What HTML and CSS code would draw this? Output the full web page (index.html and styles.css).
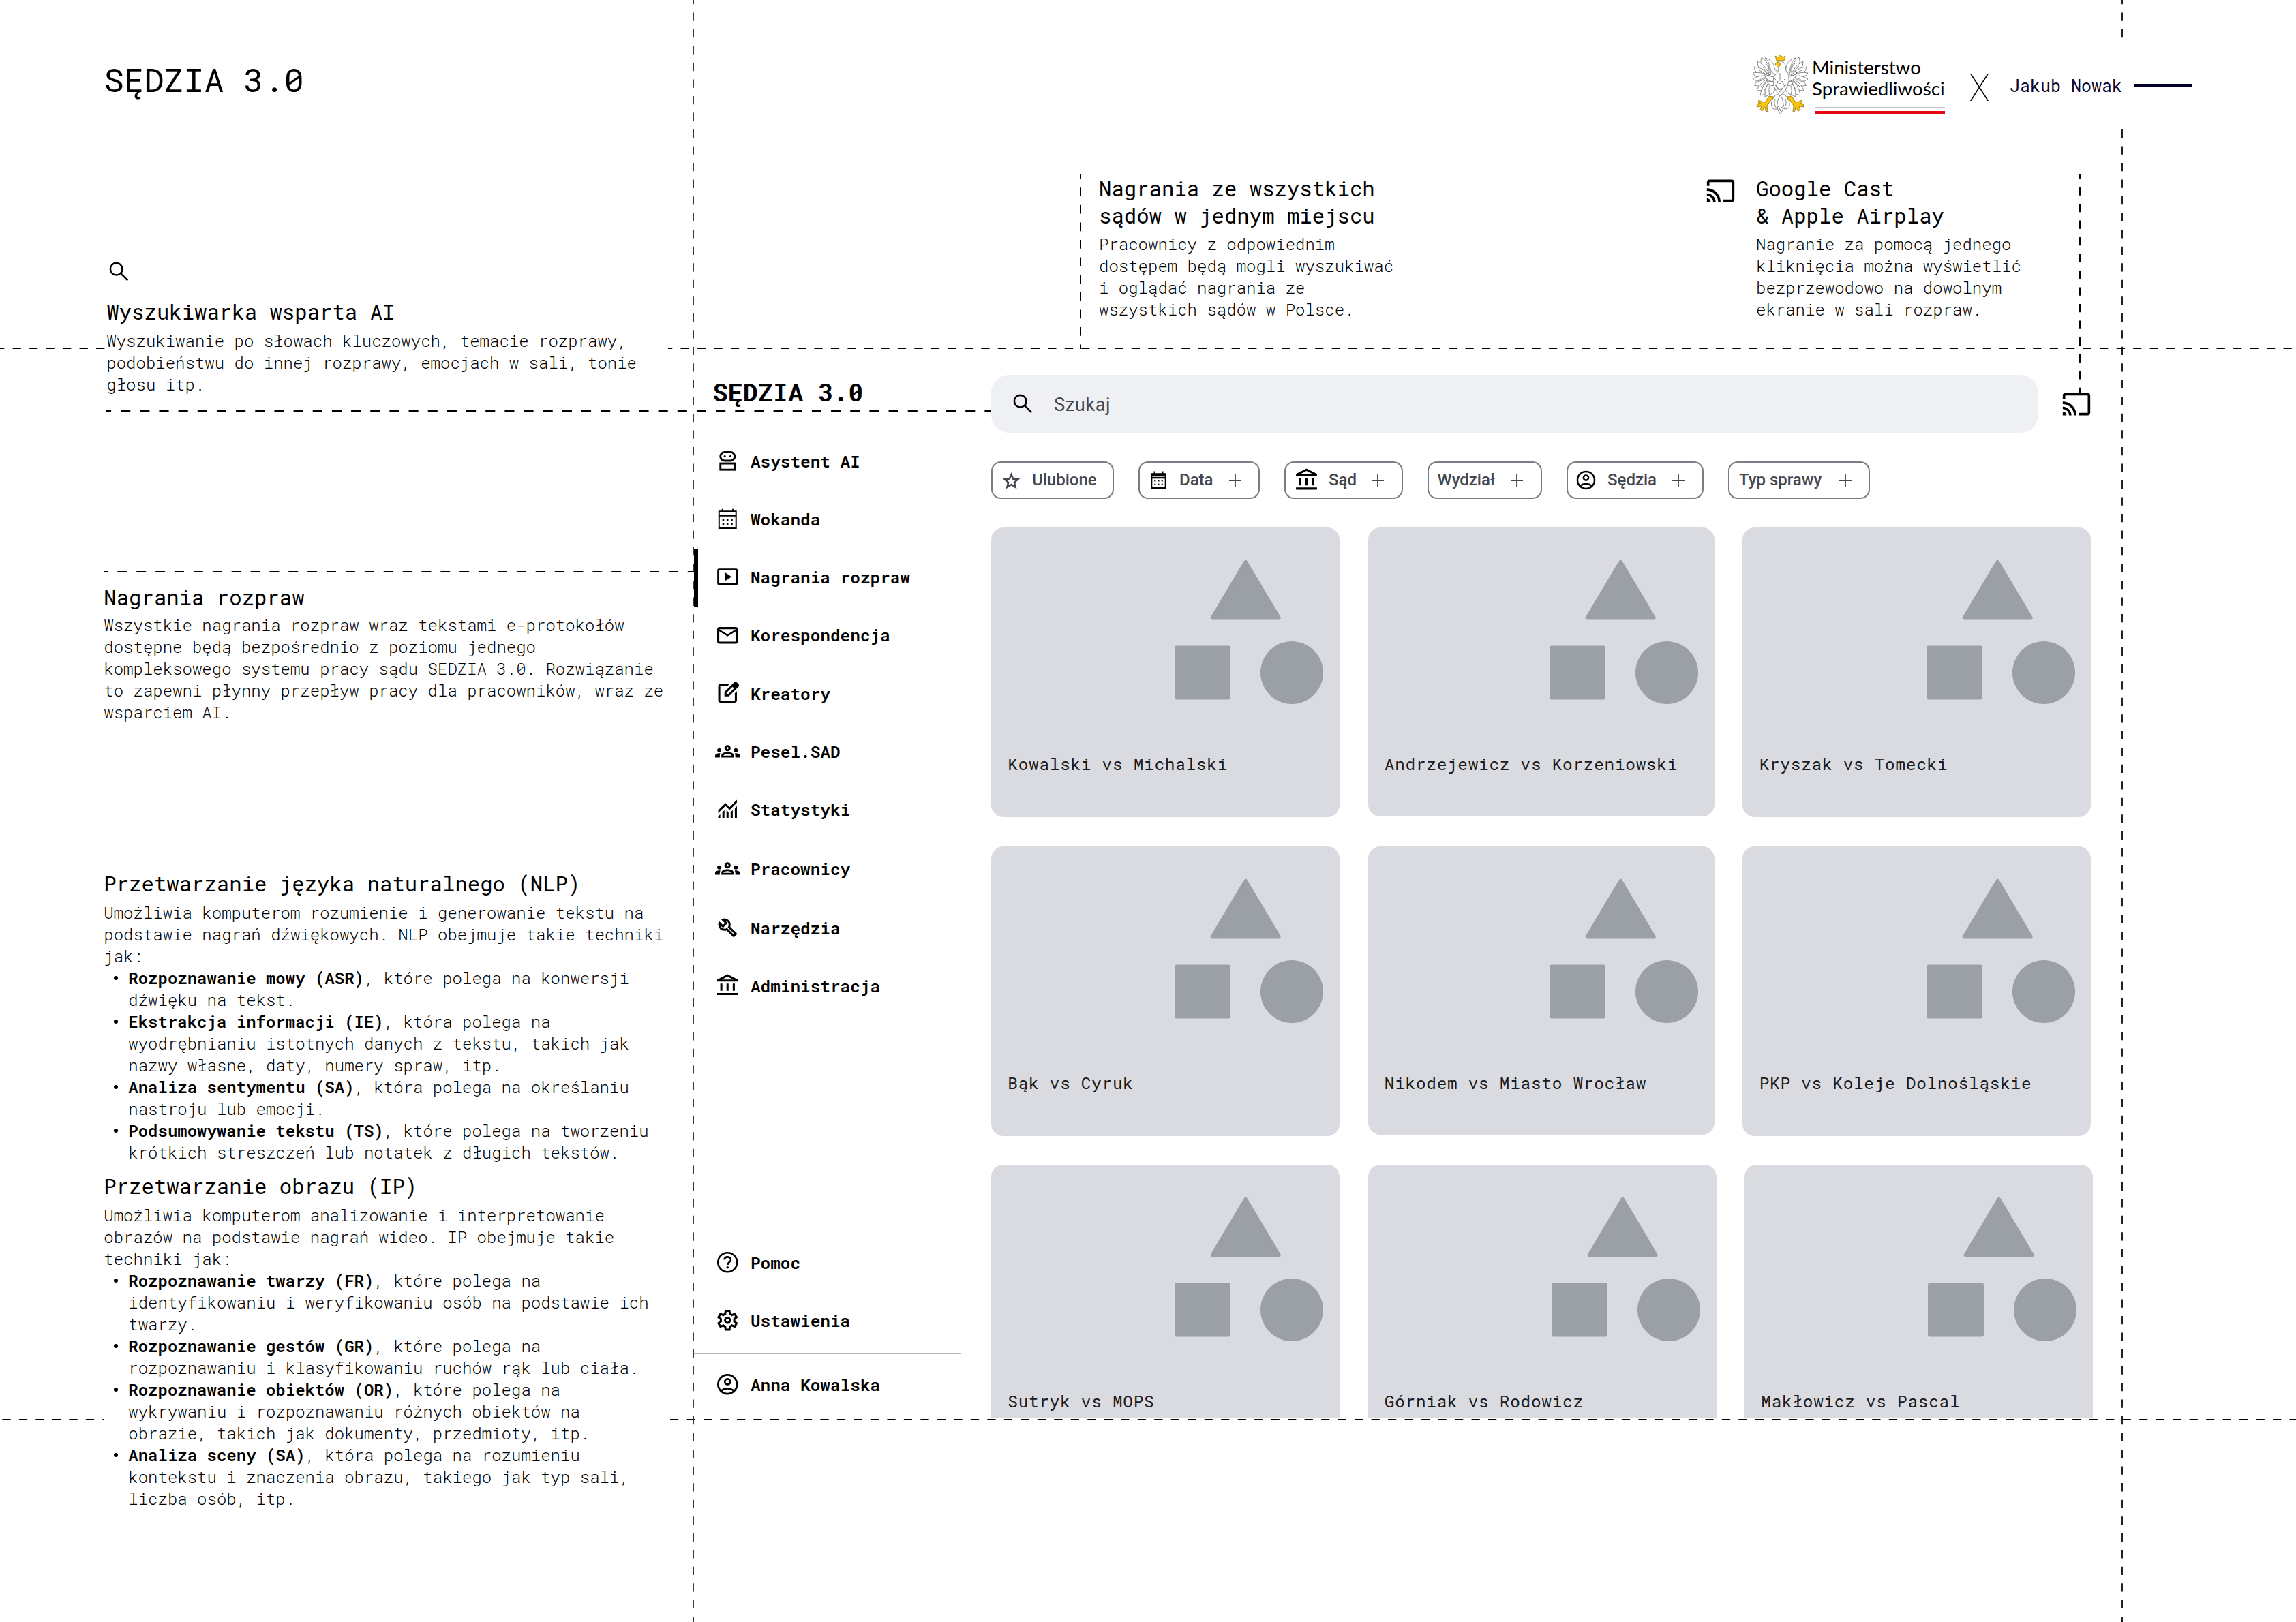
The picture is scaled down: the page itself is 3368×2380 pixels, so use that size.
FILE: index.html
```html
<!DOCTYPE html>
<html lang="pl">
<head>
<meta charset="utf-8">
<title>SĘDZIA 3.0</title>
<link rel="stylesheet" href="styles.css">
</head>
<body>
<svg class="sprite" aria-hidden="true">
  <symbol id="i-search" viewBox="0 0 24 24"><g fill="none" stroke="currentColor" stroke-width="1.65"><circle cx="9.5" cy="9.5" r="5.7"/><path d="M13.6 13.6l6.7 6.7"/></g></symbol>
  <symbol id="i-cast" viewBox="0 0 24 24"><path d="M1 18v3h3c0-1.66-1.34-3-3-3zm0-4v2c2.76 0 5 2.24 5 5h2c0-3.87-3.13-7-7-7zm0-4v2c4.97 0 9 4.03 9 9h2c0-6.08-4.93-11-11-11zm20-7H3c-1.1 0-2 .9-2 2v3h2V5h18v14h-7v2h7c1.1 0 2-.9 2-2V5c0-1.1-.9-2-2-2z"/></symbol>
  <symbol id="i-robot" viewBox="0 0 24 24"><g fill="none" stroke="currentColor" stroke-width="1.9"><rect x="5.1" y="3.5" width="13.8" height="8.3" rx="4.1"/><rect x="5.1" y="14.5" width="13.8" height="6"/></g><circle cx="9.3" cy="7.6" r="1"/><circle cx="14.7" cy="7.6" r="1"/></symbol>
  <symbol id="i-calendar" viewBox="0 0 24 24"><path fill="none" stroke="currentColor" stroke-width="1.3" d="M3.8 4.7h16.4v16.4H3.8zM3.800 9h16.4M7 2.4v2.300M17.2 2.400v2.300"/><path d="M7 12.100h1.700v1.700H7zm4.100 0h1.700v1.700h-1.700zm4.100 0h1.700v1.700h-1.700zM7 16.100h1.700v1.700H7zm4.100 0h1.700v1.700h-1.700zm4.100 0h1.700v1.700h-1.700z"/></symbol>
  <symbol id="i-calendar-bold" viewBox="0 0 24 24"><path fill="none" stroke="currentColor" stroke-width="1.800" stroke-linejoin="round" d="M4 5h16v16H4zM4 6.600h16M4 9.300h16M7.500 2v3M16.500 2v3"/><path d="M7.200 12h1.600v1.600H7.200zm4 0h1.600v1.600h-1.600zm4 0h1.600v1.600h-1.600zm-8 4h1.600v1.600H7.200zm4 0h1.600v1.600h-1.600zm4 0h1.600v1.600h-1.600z"/></symbol>
  <symbol id="i-video" viewBox="0 0 24 24"><rect x="3" y="5" width="18" height="14" rx=".8" fill="none" stroke="currentColor" stroke-width="1.8"/><path d="M9.3 7.7v8.6l6.6-4.3z"/></symbol>
  <symbol id="i-mail" viewBox="0 0 24 24"><path d="M22 6c0-1.1-.9-2-2-2H4c-1.1 0-2 .9-2 2v12c0 1.1.9 2 2 2h16c1.1 0 2-.9 2-2V6zm-2 0l-8 5-8-5h16zm0 12H4V8l8 5 8-5v10z"/></symbol>
  <symbol id="i-edit" viewBox="0 -960 960 960"><path d="M200-120q-33 0-56.500-23.500T120-200v-560q0-33 23.500-56.500T200-840h357l-80 80H200v560h560v-278l80-80v358q0 33-23.500 56.500T760-120H200ZM360-360v-170l367-367q12-12 27-18t30-6q16 0 30.500 6t26.500 18l56 57q11 12 17 26.500t6 29.500q0 15-5.500 29.500T897-728L530-360H360ZM440-440h56l232-232-28-28-29-28-231 231v57Z"/></symbol>
  <symbol id="i-groups" viewBox="0 0 24 24"><path fill-rule="evenodd" d="M4 13c1.1 0 2-.9 2-2s-.9-2-2-2-2 .9-2 2 .9 2 2 2zm1.130 1.100c-.37-.06-.74-.1-1.130-.1-.99 0-1.930.21-2.780.58C.48 14.900 0 15.620 0 16.430V18h4.500v-1.610c0-.83.23-1.610.63-2.290zM20 13c1.100 0 2-.9 2-2s-.9-2-2-2-2 .9-2 2 .9 2 2 2zm4 3.430c0-.81-.48-1.530-1.220-1.850-.85-.37-1.790-.58-2.780-.58-.39 0-.76.04-1.130.1.4.68.63 1.460.63 2.290V18H24v-1.570zM12 12.750c1.630 0 3.070.39 4.240.9 1.080.48 1.760 1.560 1.760 2.730V18H6v-1.610c0-1.180.68-2.260 1.760-2.730 1.170-.52 2.610-.91 4.240-.91zM8 16.300h8c-.1-.4-.3-.7-.7-.9-1-.4-2.100-.7-3.300-.7s-2.300.3-3.300.7c-.4.2-.6.5-.7.9zM12 6c1.660 0 3 1.340 3 3s-1.340 3-3 3-3-1.340-3-3 1.340-3 3-3zm0 2c-.55 0-1 .45-1 1s.45 1 1 1 1-.45 1-1-.45-1-1-1z"/></symbol>
  <symbol id="i-stats" viewBox="0 -960 960 960"><path d="M120-120v-80l80-80v160h-80Zm160 0v-240l80-80v320h-80Zm160 0v-320l80 81v239h-80Zm160 0v-239l80-80v319h-80Zm160 0v-400l80-80v480h-80ZM120-327v-113l280-280 160 160 280-280v113L560-447 400-607 120-327Z"/></symbol>
  <symbol id="i-build" viewBox="0 -960 960 960"><path d="M686-132 444-376q-20 8-40.500 12t-43.500 4q-100 0-170-70t-70-170q0-36 10-68.500t28-61.500l146 146 72-72-146-146q29-18 61.500-28t68.500-10q100 0 170 70t70 170q0 23-4 43.500T584-516l244 242q12 12 12 29t-12 29l-84 84q-12 12-29 12t-29-12Zm29-85 27-27-256-256q18-20 26-46.500t8-53.500q0-60-38.500-104.500T386-758l74 74q12 12 12 28t-12 28L332-500q-12 12-28 12t-28-12l-74-74q9 57 53.500 95.500T360-440q26 0 52-8t47-25l256 256Z"/></symbol>
  <symbol id="i-bank" viewBox="0 -960 960 960"><path d="M200-280v-280h80v280h-80Zm240 0v-280h80v280h-80ZM80-120v-80h800v80H80Zm600-160v-280h80v280h-80ZM80-640v-80l400-200 400 200v80H80Zm178-80h444L480-830 258-720Z"/></symbol>
  <symbol id="i-help" viewBox="0 0 24 24"><g fill="none" stroke="currentColor"><circle cx="12" cy="12" r="9.200" stroke-width="1.700"/><path stroke-width="1.700" d="M8.800 9.500c.3-1.700 1.500-2.700 3.200-2.700s3.100 1.100 3.100 2.700c0 2.300-3 2.500-3 5"/></g><circle cx="12" cy="16.900" r="1.200"/></symbol>
  <symbol id="i-gear" viewBox="0 -960 960 960"><path fill-rule="evenodd" d="m370-80-16-128q-13-5-24.500-12T307-235l-119 50L78-375l103-78q-1-7-1-13.500v-27q0-6.500 1-13.500L78-585l110-190 119 50q11-8 23-15t24-12l16-128h220l16 128q13 5 24.500 12t22.500 15l119-50 110 190-103 78q1 7 1 13.500v27q0 6.500-2 13.500l103 78-110 190-118-50q-11 8-23 15t-24 12L590-80H370Zm70-80h79l14-106q31-8 57.500-23.500T639-327l99 41 39-68-86-65q5-14 7-29.500t2-31.500q0-16-2-31.500t-7-29.500l86-65-39-68-99 42q-22-23-48.500-38.500T533-694l-13-106h-79l-14 106q-31 8-57.500 23.500T321-633l-99-41-39 68 86 64q-5 15-7 30t-2 32q0 16 2 31t7 30l-86 65 39 68 99-42q22 23 48.500 38.500T427-266l13 106Z"/><circle cx="480" cy="-480" r="98" fill="none" stroke="currentColor" stroke-width="76"/></symbol>
  <symbol id="i-user" viewBox="0 0 24 24"><g fill="none" stroke="currentColor" stroke-width="1.800"><circle cx="12" cy="12" r="9.100"/><circle cx="12" cy="9.500" r="2.650"/><path d="M5.800 18.300c1.600-1.400 3.700-2.300 6.200-2.300s4.600.9 6.200 2.300"/></g></symbol>
  <symbol id="i-star" viewBox="0 -960 960 960"><path d="m354-247 126-76 126 77-33-144 111-96-146-13-58-136-58 135-146 13 111 97-33 143ZM233-80l65-281L80-550l288-25 112-265 112 265 288 25-218 189 65 281-247-149L233-80Z"/></symbol>
  <symbol id="i-plus" viewBox="0 0 18 18"><path fill="none" stroke="currentColor" stroke-width="1.800" d="M9 0v18M0 9h18"/></symbol>
  <symbol id="i-shapes" viewBox="0 0 218 212">
    <g fill="#9b9fa6" stroke="#9b9fa6" stroke-linejoin="round" stroke-width="6"><path d="M104.200 4L55.700 85.500h97z"/><rect x="3" y="129.600" width="76" height="73"/></g><circle cx="172" cy="166" r="46" fill="#9b9fa6"/>
  </symbol>
  <symbol id="i-wing" viewBox="0 0 41 89" overflow="visible">
    <g fill="#fff" stroke="#6b6b6b" stroke-width=".8">
      <path d="M24 30Q8 18 13 5Q24 12 27 30z"/><path d="M24 31Q6 24 7 11Q20 17 25 32z"/><path d="M24 32Q2 31 2 19Q17 20 25 33z"/><path d="M24 33Q4 38 0 28Q14 25 25 34z"/>
      <path d="M25 34Q8 45 0 37Q12 29 25 34z"/><path d="M26 34Q13 51 2 46Q9 35 25 34z"/><path d="M27 35Q19 56 6 54Q10 41 26 35z"/><path d="M28 35Q24 61 11 61Q13 45 27 35z"/><path d="M30 36Q30 61 18 63Q17 48 28 36z"/><path d="M33 38Q36 58 25 60Q21 50 30 37z"/>
      <path d="M36 31Q27 30 25 18Q24 11 18 6Q31 9 32 21Q34 26 38 27z"/><path d="M35 40Q20 44 16 27Q20 34 36 34z"/><path d="M36 45Q26 50 21 41Q28 42 37 38z"/>
      <path d="M19 14q6 6 5 14M13 18q6 4 8 11M9 24q6 2 10 7M8 41q8-3 12-6M12 48q6-5 9-9M17 54q3-6 6-11" fill="none"/>
    </g>
    <path fill="#f6c40f" stroke="#94751a" stroke-width=".8" d="M31 63l-7-1-6 9-5-1-4-2-1 4 4 1-5 1-1 4 7-1-2 5 3 2 4-6 1 6 3 1-1-9 5-7z"/>
  </symbol>
</svg>

<div class="board">
  <header class="topbar">
    <h1 class="title">SĘDZIA 3.0</h1>
    <div class="brands">
      <svg class="eagle" viewBox="0 0 81 89" overflow="visible">
        <g fill="#fff" stroke="#6b6b6b" stroke-width=".8">
          <path d="M34 60Q24 70 29 80Q36 84 40 76Q47 84 53 79Q57 70 47 60z"/>
          <path d="M40.500 60Q31 76 40.500 89Q50 76 40.500 60zM33 66q-3 8 2 14M48 66q3 8-2 14M36 76q4 2 4.500 8q.5-6 5-8" />
        </g>
        <use href="#i-wing" x="0" y="0" width="41" height="89"/>
        <use href="#i-wing" width="41" height="89" transform="translate(81 0) scale(-1 1)"/>
        <g fill="#fff" stroke="#6b6b6b" stroke-width=".8">
          <path d="M37 11Q47 9 48 18Q48 26 53 32Q55 48 40.500 62Q27 48 31 33Q39 27 38 19z"/>
          <path d="M32 36l8 8 9-9M31 44l9 9 11-9M40 28v10l-6 8 6 10 7-10-7-8" fill="none"/>
        </g>
        <path fill="#f6c40f" stroke="#94751a" stroke-width=".8" d="M35 10l-2-7 4 2 3.500-4 3.500 4 4-2-2 7zM38 12q-5 0-5 5l3-1-1 4q6-1 6-6z"/>
      </svg>
      <div class="ministry">Ministerstwo<br>Sprawiedliwości<span class="flag"></span></div>
      <svg class="cross" viewBox="0 0 27 40"><path d="M.7 0L26.300 40M26.300 0L.7 40" stroke="#000" stroke-width="1.600"/></svg>
      <span class="author">Jakub Nowak</span>
      <span class="dash"></span>
    </div>
  </header>

  <div class="content">
    <aside class="notes">
      <section class="note note-search">
        <svg class="note-icon"><use href="#i-search"/></svg>
        <h2>Wyszukiwarka wsparta AI</h2>
        <p>Wyszukiwanie po słowach kluczowych, temacie rozprawy,<br>podobieństwu do innej rozprawy, emocjach w sali, tonie<br>głosu itp.</p>
      </section>
      <section class="note note-recordings">
        <h2>Nagrania rozpraw</h2>
        <p>Wszystkie nagrania rozpraw wraz tekstami e-protokołów<br>dostępne będą bezpośrednio z poziomu jednego<br>kompleksowego systemu pracy sądu SEDZIA 3.0. Rozwiązanie<br>to zapewni płynny przepływ pracy dla pracowników, wraz ze<br>wsparciem AI.</p>
      </section>
      <section class="note note-nlp">
        <h2>Przetwarzanie języka naturalnego (NLP)</h2>
        <p>Umożliwia komputerom rozumienie i generowanie tekstu na<br>podstawie nagrań dźwiękowych. NLP obejmuje takie techniki<br>jak:</p>
        <ul>
          <li><b>Rozpoznawanie mowy (ASR)</b>, które polega na konwersji<br>dźwięku na tekst.</li>
          <li><b>Ekstrakcja informacji (IE)</b>, która polega na<br>wyodrębnianiu istotnych danych z tekstu, takich jak<br>nazwy własne, daty, numery spraw, itp.</li>
          <li><b>Analiza sentymentu (SA)</b>, która polega na określaniu<br>nastroju lub emocji.</li>
          <li><b>Podsumowywanie tekstu (TS)</b>, które polega na tworzeniu<br>krótkich streszczeń lub notatek z długich tekstów.</li>
        </ul>
      </section>
      <section class="note note-image">
        <h2>Przetwarzanie obrazu (IP)</h2>
        <p>Umożliwia komputerom analizowanie i interpretowanie<br>obrazów na podstawie nagrań wideo. IP obejmuje takie<br>techniki jak:</p>
        <ul>
          <li><b>Rozpoznawanie twarzy (FR)</b>, które polega na<br>identyfikowaniu i weryfikowaniu osób na podstawie ich<br>twarzy.</li>
          <li><b>Rozpoznawanie gestów (GR)</b>, które polega na<br>rozpoznawaniu i klasyfikowaniu ruchów rąk lub ciała.</li>
          <li><b>Rozpoznawanie obiektów (OR)</b>, które polega na<br>wykrywaniu i rozpoznawaniu różnych obiektów na<br>obrazie, takich jak dokumenty, przedmioty, itp.</li>
          <li><b>Analiza sceny (SA)</b>, która polega na rozumieniu<br>kontekstu i znaczenia obrazu, takiego jak typ sali,<br>liczba osób, itp.</li>
        </ul>
      </section>
    </aside>

    <div class="product">
      <div class="callouts">
        <section class="note callout-courts">
          <h2>Nagrania ze wszystkich<br>sądów w jednym miejscu</h2>
          <p>Pracownicy z odpowiednim<br>dostępem będą mogli wyszukiwać<br>i oglądać nagrania ze<br>wszystkich sądów w Polsce.</p>
        </section>
        <svg class="cast callout-icon"><use href="#i-cast"/></svg>
        <section class="note">
          <h2>Google Cast<br>&amp; Apple Airplay</h2>
          <p>Nagranie za pomocą jednego<br>kliknięcia można wyświetlić<br>bezprzewodowo na dowolnym<br>ekranie w sali rozpraw.</p>
        </section>
      </div>

      <div class="app">
        <nav class="sidebar">
          <div class="logo">SĘDZIA 3.0</div>
          <div class="menu">
            <a class="item"><svg><use href="#i-robot"/></svg><span>Asystent AI</span></a>
            <a class="item"><svg><use href="#i-calendar"/></svg><span>Wokanda</span></a>
            <a class="item active"><svg><use href="#i-video"/></svg><span>Nagrania rozpraw</span></a>
            <a class="item"><svg><use href="#i-mail"/></svg><span>Korespondencja</span></a>
            <a class="item"><svg><use href="#i-edit"/></svg><span>Kreatory</span></a>
            <a class="item"><svg><use href="#i-groups"/></svg><span>Pesel.SAD</span></a>
            <a class="item"><svg><use href="#i-stats"/></svg><span>Statystyki</span></a>
            <a class="item loose"><svg><use href="#i-groups"/></svg><span>Pracownicy</span></a>
            <a class="item loose"><svg><use href="#i-build"/></svg><span>Narzędzia</span></a>
            <a class="item"><svg><use href="#i-bank"/></svg><span>Administracja</span></a>
          </div>
          <div class="menu-foot">
            <a class="item"><svg><use href="#i-help"/></svg><span>Pomoc</span></a>
            <a class="item"><svg><use href="#i-gear"/></svg><span>Ustawienia</span></a>
          </div>
          <div class="account"><a class="item"><svg><use href="#i-user"/></svg><span>Anna Kowalska</span></a></div>
        </nav>

        <main class="main">
          <div class="search-row">
            <div class="search"><svg><use href="#i-search"/></svg><span>Szukaj</span></div>
            <svg class="cast"><use href="#i-cast"/></svg>
          </div>
          <div class="chips">
            <div class="chip chip-fav"><svg class="ico-s"><use href="#i-star"/></svg><span>Ulubione</span></div>
            <div class="chip chip-date"><svg class="ico-s"><use href="#i-calendar-bold"/></svg><span>Data</span><svg class="plus"><use href="#i-plus"/></svg></div>
            <div class="chip chip-court"><svg class="ico-l"><use href="#i-bank"/></svg><span>Sąd</span><svg class="plus"><use href="#i-plus"/></svg></div>
            <div class="chip chip-dept"><span>Wydział</span><svg class="plus"><use href="#i-plus"/></svg></div>
            <div class="chip chip-judge"><svg class="ico-m"><use href="#i-user"/></svg><span>Sędzia</span><svg class="plus"><use href="#i-plus"/></svg></div>
            <div class="chip chip-type"><span>Typ sprawy</span><svg class="plus"><use href="#i-plus"/></svg></div>
          </div>
          <div class="cards">
            <div class="card"><svg><use href="#i-shapes"/></svg><span>Kowalski vs Michalski</span></div>
            <div class="card short"><svg><use href="#i-shapes"/></svg><span>Andrzejewicz vs Korzeniowski</span></div>
            <div class="card"><svg><use href="#i-shapes"/></svg><span>Kryszak vs Tomecki</span></div>
          </div>
          <div class="cards">
            <div class="card"><svg><use href="#i-shapes"/></svg><span>Bąk vs Cyruk</span></div>
            <div class="card short"><svg><use href="#i-shapes"/></svg><span>Nikodem vs Miasto Wrocław</span></div>
            <div class="card"><svg><use href="#i-shapes"/></svg><span>PKP vs Koleje Dolnośląskie</span></div>
          </div>
          <div class="cards">
            <div class="card"><svg><use href="#i-shapes"/></svg><span>Sutryk vs MOPS</span></div>
            <div class="card"><svg><use href="#i-shapes"/></svg><span>Górniak vs Rodowicz</span></div>
            <div class="card"><svg><use href="#i-shapes"/></svg><span>Makłowicz vs Pascal</span></div>
          </div>
        </main>
      </div>
    </div>
  </div>

  <svg class="guides" viewBox="0 0 3368 2380" fill="none" stroke="#000" stroke-width="2">
    <g stroke-dasharray="12.260 12.260">
      <path stroke="#3c3c3c" d="M1017-6.100V2380"/>
      <path stroke="#222" d="M3113-6.100V56M3113 190V2380"/>
      <path stroke-dashoffset="6.100" d="M3051 256V577"/>
    </g>
    <g stroke-dasharray="12.245 12.245">
      <path d="M-5.900 511H155"/><path stroke-dashoffset="6" d="M980 511H3368"/>
      <path d="M3.400 2083H152.500"/><path d="M983 2083H3368"/>
    </g>
    <path stroke-dasharray="12.800 12.800" stroke-dashoffset="6.400" d="M1585 256V512"/>
    <path stroke-dasharray="14.080 14.080" stroke-dashoffset="7" d="M156 603H1453"/>
    <path stroke-dasharray="13.940 13.940" stroke-dashoffset="7.500" d="M152 839H1018"/>
  </svg>
</div>
</body>
</html>
```
FILE: styles.css
```css
* { box-sizing: border-box; margin: 0; padding: 0; }

body {
  background: #fff;
  color: #000;
  font-family: "Roboto Mono", "Liberation Mono", monospace;
}

svg { display: block; flex: none; fill: currentColor; }
.sprite { position: absolute; width: 0; height: 0; }

.board { position: relative; width: 3368px; height: 2380px; overflow: hidden; }

.guides { position: absolute; left: 0; top: 0; width: 3368px; height: 2380px; fill: none; pointer-events: none; }

/* Top bar */
.topbar { display: flex; justify-content: space-between; height: 240px; padding: 0 152px 0 152.500px; }
.title { padding-top: 84px; font-size: 48.900px; line-height: 64px; font-weight: 400; }
.brands { display: flex; align-items: flex-start; }
.eagle { width: 81px; height: 89px; margin-top: 79px; fill: none; }
.ministry { width: 196px; margin: 83px 0 0 6.500px; font-family: Lato, "Open Sans", sans-serif; font-size: 27.700px; line-height: 31.400px; white-space: nowrap; }
.flag { display: block; width: 191px; height: 11px; margin: 11.500px 0 0 4px; border-top: 2px solid #c9c9c9; border-bottom: 5px solid #e30613; }
.cross { width: 27px; height: 40px; margin: 108px 0 0 36px; }
.author { margin: 110px 0 0 31px; width: 169.500px; font-size: 25px; line-height: 32px; color: #0b0730; white-space: nowrap; }
.dash { width: 86px; height: 5px; margin: 123px 0 0 12.500px; background: #02022b; }

/* Layout */
.content { display: grid; grid-template-columns: 1018px 1fr; }
.product { display: flex; flex-direction: column; }

/* Annotations */
.notes { display: flex; flex-direction: column; padding: 139.500px 0 0 152.300px; }
.note h2 { font-size: 30.670px; line-height: 40px; font-weight: 400; white-space: nowrap; }
.note p, .note li { font-size: 24px; line-height: 32px; font-weight: 300; white-space: nowrap; }
.note p { margin-top: 6px; }
.note b { font-weight: 600; }
.note ul { list-style: none; }
.note li { position: relative; padding-left: 36px; }
.note li::before { content: ""; position: absolute; left: 15px; top: 13.500px; width: 6px; height: 6px; border-radius: 50%; background: #000; }
.note-icon { width: 37px; height: 37px; }
.note-search { padding-left: 4px; }
.note-search h2 { margin-top: 20px; }
.note-search p { margin-top: 7.500px; }
.note-recordings { margin-top: 275.500px; }
.note-recordings p { margin-top: 5.300px; }
.note-nlp { margin-top: 215px; }
.note-nlp p, .note-image p { margin-top: 7px; }
.note-image { margin-top: 13px; }

.callouts { display: flex; height: 272px; padding: 16px 0 0 594px; }
.callouts .note p { margin-top: 5.500px; }
.callout-courts { width: 890px; }
.cast { width: 44px; height: 44px; }
.callout-icon { margin: 2px 30px 0 0; }

/* Application */
.app { display: flex; height: 1568px; overflow: hidden; }
.sidebar { display: flex; flex-direction: column; width: 392px; border-right: 1.500px solid #a8a8a8; }
.logo { padding: 38.500px 0 0 27.500px; font-size: 36.800px; line-height: 48px; font-weight: 700; }
.menu { margin-top: 35.200px; }
.item { position: relative; display: flex; align-items: center; height: 85.200px; padding-left: 30.700px; gap: 15.700px; font-size: 24.400px; font-weight: 600; }
.item svg { width: 36.500px; height: 36.500px; }
.item.loose { margin-top: 1.800px; }
.item.active::before { content: ""; position: absolute; left: 0; top: 1px; width: 6px; height: 85px; background: #000; }
.menu-foot { margin-top: auto; }
.account { height: 95px; margin-top: 5px; padding-top: 2px; border-top: 2px solid #b4b4b4; }

.main { flex: 1; padding: 38px 0 0 44px; }
.search-row { display: flex; align-items: center; gap: 33.500px; }
.search { display: flex; align-items: center; width: 1536px; height: 85px; padding-left: 27.500px; border-radius: 26px; background: #eff0f4; font-family: Roboto, sans-serif; font-size: 27.300px; letter-spacing: .5px; color: #45464f; }
.search svg { width: 37px; height: 37px; margin-right: 27.500px; color: #000; }
.search span { padding-top: 2px; }

.chips { display: flex; gap: 36px; margin-top: 42px; }
.chip { display: flex; align-items: center; height: 55px; padding-left: 14px; border: 2px solid #7d7c86; border-radius: 14px; font-family: Roboto, sans-serif; font-size: 24px; font-weight: 500; color: #45464f; white-space: nowrap; }
.chip span { padding-bottom: 2px; }
.chip .plus { width: 18px; height: 18px; margin-left: auto; }
.ico-s { width: 31px; height: 31px; }
.ico-m { width: 33px; height: 33px; color: #000; }
.ico-l { width: 37px; height: 37px; color: #000; }
.chip-fav { width: 180px; padding-left: 12px; gap: 15px; }
.chip-date { width: 178px; padding: 0 25px 0 12px; gap: 15px; }
.chip-date .ico-s { color: #000; }
.chip-court { width: 173.500px; padding: 0 26px 0 12px; gap: 14px; }
.chip-dept { width: 168px; padding: 0 26px 0 13px; }
.chip-judge { width: 201.500px; padding: 0 26px 0 10.500px; gap: 15px; }
.chip-type { width: 208px; padding-right: 25px; }

.cards { display: flex; gap: 41.500px; margin-top: 42.500px; }
.chips + .cards { margin-top: 42px; }
.card { display: flex; flex-direction: column; width: 511px; height: 425px; padding-top: 47px; border-radius: 18px; background: #dadbe0; color: #1b1b1f; }
.card.short { width: 508.400px; height: 423.500px; }
.card svg { width: 218px; height: 212px; margin-right: 23.600px; align-self: flex-end; }
.card span { margin: 72.300px 0 0 24.300px; font-size: 24.360px; line-height: 32px; letter-spacing: .75px; }
```
